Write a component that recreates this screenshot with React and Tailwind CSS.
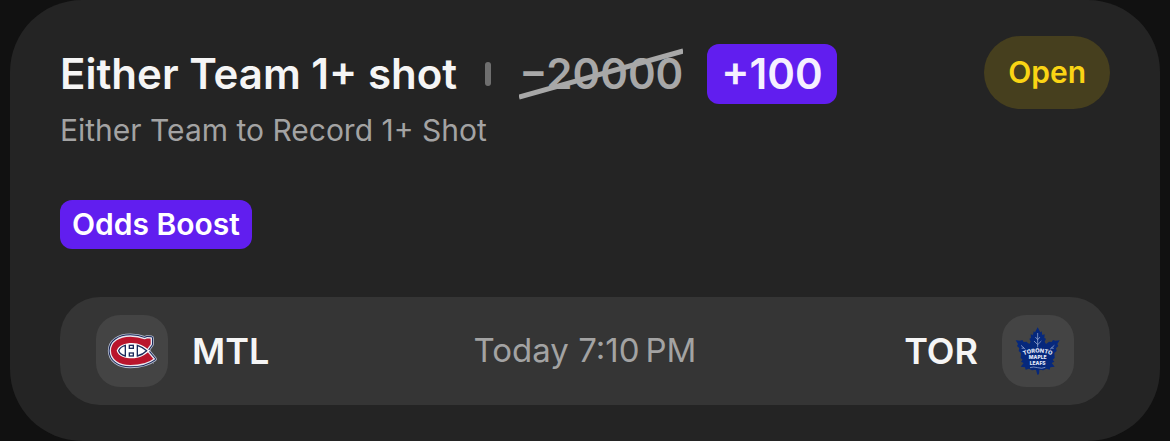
function CanadiensLogo() {
  const crest =
    'M154 68 L166 69 L166 88 L153 106 L175 132 C156 147 130 152 103 152 C67 152 43 133 43 107 C43 80 68 63 103 63 C120 63 134 66 146 71 Z';

  return (
    <svg viewBox="0 0 216 216" className="size-18" role="img" aria-label="Montreal Canadiens">
      <g strokeLinejoin="round">
        <path d={crest} fill="none" stroke="#b4bccd" strokeWidth="15" />
        <path d={crest} fill="none" stroke="#1c2a5c" strokeWidth="10" />
        <path d={crest} fill="#b9152c" stroke="#e8e9f0" strokeWidth="4" />
      </g>
      <path d="M62 107 C68 90 88 84 108 84 C130 84 144 93 157 104 L164 107 L157 111 C144 122 130 130 108 130 C88 130 68 125 62 107 Z" fill="#ffffff" />
      <g fill="#ffffff" stroke="#1c2a5c" strokeWidth="4">
        <path d="M88 91 C77 94 71 100 68 107 C71 115 77 120 88 123 Z" />
        <rect x="100" y="91" width="12" height="9" />
        <rect x="100" y="114" width="12" height="9" />
        <path d="M124 91 C136 95 144 100 152 107 C144 115 136 120 124 123 Z" />
      </g>
      <circle cx="172" cy="144" r="2" fill="#8b93a5" />
    </svg>
  );
}

function MapleLeafsLogo() {
  return (
    <svg viewBox="0 0 216 216" className="size-18" role="img" aria-label="Toronto Maple Leafs">
      <path
        d="M107 37 L115 52 L119 49 L121 60 L128 58 L127 69 L132 71 L128 80 L132 87 L141 80 L149 81 L153 75 L160 77 L173 76 L166 87 L169 93 L162 100 L164 108 L157 114 L158 129 L152 134 L157 140 L149 144 L158 155 L145 157 L143 164 L133 161 L124 166 L112 164 L111 178 L106 179 L102 164 L90 166 L81 161 L71 164 L69 157 L56 155 L65 144 L57 140 L62 134 L56 129 L57 114 L50 108 L52 100 L45 93 L48 87 L41 76 L54 77 L61 75 L65 81 L73 80 L82 87 L86 80 L82 71 L87 69 L86 58 L93 60 L95 49 L99 52 Z"
        fill="#06287c"
      />
      <g fill="none" stroke="#a9b9e0" strokeWidth="2">
        <path d="M107 54 V97 M107 74 L100 66 M107 74 L114 66 M107 89 L96 78 M107 89 L118 78" />
        <path d="M57 91 L70 103 M59 100 L66 99 M157 91 L144 103 M155 100 L148 99" />
        <path d="M84 158 Q94 154 107 158 T130 157" />
      </g>
      <path id="leaf-arc" d="M60 123 Q107 102 154 123" fill="none" />
      <g fill="#e4eafa" fontFamily="Inter, sans-serif" fontWeight="800" fontSize="15" textAnchor="middle">
        <text fontSize="17">
          <textPath href="#leaf-arc" startOffset="50%">TORONTO</textPath>
        </text>
        <text x="107" y="133">MAPLE</text>
        <text x="107" y="150">LEAFS</text>
      </g>
    </svg>
  );
}

function TeamBadge({ children }) {
  return (
    <div className="flex size-18 items-center justify-center rounded-3xl bg-[#444444]">{children}</div>
  );
}

export default function App() {
  return (
    <div className="bg-[#111111] px-[10px] font-['Inter',sans-serif]">
      <article className="rounded-[72px] bg-[#242424] px-[50px] pt-9 pb-9">
        <div className="flex items-start justify-between">
          <div>
            <div className="flex items-center pt-2">
              <h2 className="text-[42px] leading-[60px] font-semibold whitespace-nowrap text-[#f5f5f5]">
                Either Team 1+ shot
              </h2>
              <span className="ml-7 h-6 w-1.5 rounded-full bg-[#6f6f6f]" />
              <del className="relative ml-7 text-[42px] leading-[60px] font-semibold text-[#a8a8a8] no-underline">
                −20000
                <svg
                  viewBox="0 0 162 52"
                  preserveAspectRatio="none"
                  className="absolute inset-x-0 top-1 h-[52px] w-full"
                  aria-hidden="true"
                >
                  <path d="M0 49 L162 3" stroke="#a8a8a8" strokeWidth="5" />
                </svg>
              </del>
              <span className="ml-6 rounded-xl bg-[#611eef] px-3.5 text-[42px] leading-[60px] font-semibold text-[#f5f0ff]">
                +100
              </span>
            </div>
            <p className="mt-1 text-[30px] leading-[44px] text-[#a3a3a3]">Either Team to Record 1+ Shot</p>
          </div>
          <button
            type="button"
            className="h-[73px] rounded-full bg-[#463f1e] px-6 text-[30px] font-semibold text-[#fad414]"
          >
            Open
          </button>
        </div>

        <div className="mt-12 flex">
          <span className="rounded-xl bg-[#611eef] px-3 text-[30px] leading-[49px] font-semibold text-white">
            Odds Boost
          </span>
        </div>

        <div className="mt-12 grid grid-cols-[1fr_auto_1fr] items-center rounded-[40px] bg-[#353535] px-9 py-[18px]">
          <div className="flex items-center gap-6">
            <TeamBadge>
              <CanadiensLogo />
            </TeamBadge>
            <span className="text-[36px] font-semibold text-[#f5f5f5]">MTL</span>
          </div>
          <time className="text-[33px] text-[#a3a3a3]">Today 7:10{'\u202f'}PM</time>
          <div className="flex items-center justify-end gap-6">
            <span className="text-[36px] font-semibold text-[#f5f5f5]">TOR</span>
            <TeamBadge>
              <MapleLeafsLogo />
            </TeamBadge>
          </div>
        </div>
      </article>
    </div>
  );
}
